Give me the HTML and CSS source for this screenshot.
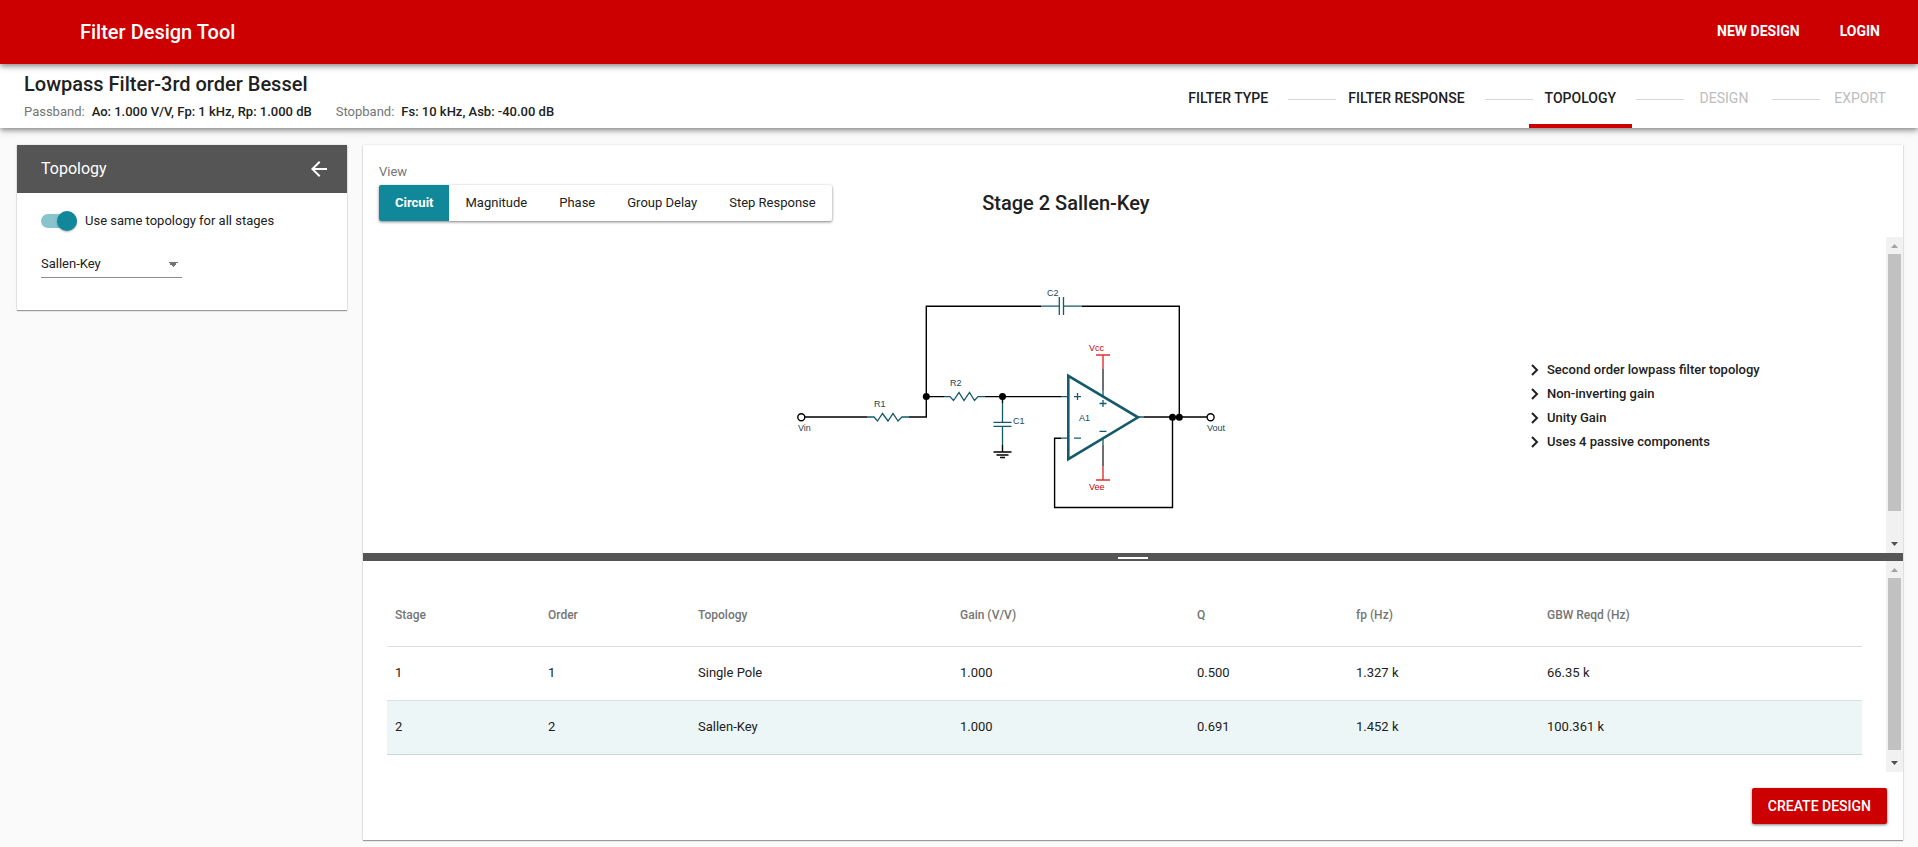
FILE: index.html
```html
<!DOCTYPE html>
<html lang="en">
<head>
<meta charset="utf-8">
<title>Filter Design Tool</title>
<link rel="stylesheet" href="styles.css">
</head>
<body>
<header class="topbar">
  <h1 class="brand">Filter Design Tool</h1>
  <nav class="topnav">
    <a href="#new">NEW DESIGN</a>
    <a href="#login">LOGIN</a>
  </nav>
</header>

<section class="subbar">
  <div class="summary">
    <h2 class="summary-title">Lowpass Filter-3rd order Bessel</h2>
    <p class="summary-specs">
      <span class="spec"><span class="muted">Passband:</span><span class="value">Ao: 1.000 V/V, Fp: 1 kHz, Rp: 1.000 dB</span></span>
      <span class="spec"><span class="muted">Stopband:</span><span class="value">Fs: 10 kHz, Asb: -40.00 dB</span></span>
    </p>
  </div>
  <nav class="steps">
    <a class="step" href="#type">FILTER TYPE</a>
    <span class="step-line"></span>
    <a class="step" href="#response">FILTER RESPONSE</a>
    <span class="step-line"></span>
    <a class="step current" href="#topology" aria-current="step">TOPOLOGY</a>
    <span class="step-line"></span>
    <a class="step disabled" href="#design">DESIGN</a>
    <span class="step-line"></span>
    <a class="step disabled" href="#export">EXPORT</a>
  </nav>
</section>

<main class="workspace">
  <aside class="card side">
    <div class="side-head">
      <h3>Topology</h3>
      <button class="icon-btn" type="button" aria-label="Collapse panel">
        <svg width="24" height="24" viewBox="0 0 24 24"><path fill="#fff" d="M20 11H7.83l5.59-5.59L12 4l-8 8 8 8 1.41-1.41L7.83 13H20v-2z"/></svg>
      </button>
    </div>
    <div class="side-body">
      <label class="toggle"><input type="checkbox" checked><span>Use same topology for all stages</span></label>
      <select class="select" aria-label="Topology">
        <option>Sallen-Key</option>
      </select>
    </div>
  </aside>

  <section class="card content">
    <div class="toolbar">
      <div class="view">
        <span class="view-label" id="view-label">View</span>
        <div class="tabs" role="tablist" aria-labelledby="view-label">
          <button class="tab active" type="button" role="tab" aria-selected="true">Circuit</button>
          <button class="tab" type="button" role="tab">Magnitude</button>
          <button class="tab" type="button" role="tab">Phase</button>
          <button class="tab" type="button" role="tab">Group Delay</button>
          <button class="tab" type="button" role="tab">Step Response</button>
        </div>
      </div>
      <h2 class="stage-title">Stage 2 Sallen-Key</h2>
    </div>

    <div class="pane pane-circuit">
      <div class="circuit">
        <svg class="schematic" viewBox="790 275 440 240" role="img" aria-label="Sallen-Key circuit">
          <g class="wire">
            <path d="M805 417H867M909 417H926.3V306.2H1041M1082 306.2H1179.3V417"/>
            <path d="M926.3 396.6H944M985 396.6H1061M1002.5 396.6V403M1002.5 445V452"/>
            <path d="M1061 438.2H1054.6V507.5H1172.5V417M1144 417H1207"/>
            <path d="M993.5 452H1011.5M996.5 455H1008.5M1000 457.5H1005"/>
            <circle cx="801.3" cy="417.2" r="3.5"/>
            <circle cx="1210.6" cy="417.2" r="3.5"/>
          </g>
          <g class="supply-lead"><path d="M1103 369V390M1103 445V466"/></g>
          <g class="dot">
            <circle cx="926.3" cy="396.6" r="3.5"/>
            <circle cx="1002.5" cy="396.6" r="3.5"/>
            <circle cx="1172.5" cy="417.2" r="3.5"/>
            <circle cx="1179.3" cy="417.2" r="3.5"/>
          </g>
          <g class="part">
            <path d="M867 417H874L877.5 421L882.5 413.5L888 421L893 413.5L898 421L902 417H909"/>
            <path d="M944 396.6H950L953.5 400.5L959 392.5L964 400.5L969.5 392.5L974.5 400.5L978 396.6H985"/>
            <path d="M1002.5 403V422.3M1002.5 426.3V445M993.5 422.3H1011.5M993.5 426.3H1011.5"/>
            <path d="M1041 306.2H1059.3M1063.5 306.2H1082M1059.3 297V315M1063.5 297V315"/>
            <path d="M1061 396.6H1068M1061 438.2H1068M1138 417H1144M1103 390V397M1103 438V445"/>
            <path d="M1074 396.6H1081M1077.5 393V400M1074 438.2H1081M1099.5 403.5H1106.5M1103 400V407M1099.5 431.3H1106.5"/>
          </g>
          <path class="amp" d="M1068.3 375.8V459.2L1138 417.3Z"/>
          <g class="supply"><path d="M1096 355H1110M1103 355V369M1103 466V480M1096 480H1110"/></g>
          <g class="label">
            <text x="798" y="431">Vin</text>
            <text x="874" y="407">R1</text>
            <text x="950" y="386">R2</text>
            <text x="1013" y="424">C1</text>
            <text x="1047" y="296">C2</text>
            <text x="1079" y="421">A1</text>
            <text x="1207" y="431">Vout</text>
            <text class="red" x="1089" y="351">Vcc</text>
            <text class="red" x="1089" y="490">Vee</text>
          </g>
        </svg>
        <ul class="features">
          <li><svg class="chev" viewBox="0 0 8 12"><path d="M1 1L6 6L1 11"/></svg>Second order lowpass filter topology</li>
          <li><svg class="chev" viewBox="0 0 8 12"><path d="M1 1L6 6L1 11"/></svg>Non-inverting gain</li>
          <li><svg class="chev" viewBox="0 0 8 12"><path d="M1 1L6 6L1 11"/></svg>Unity Gain</li>
          <li><svg class="chev" viewBox="0 0 8 12"><path d="M1 1L6 6L1 11"/></svg>Uses 4 passive components</li>
        </ul>
      </div>
      <div class="scrollbar" aria-hidden="true">
        <svg class="sb-arrow off" viewBox="0 0 17 17"><path d="M5 11L8.5 7L12 11Z"/></svg>
        <div class="sb-track"><div class="sb-thumb" style="height:91%"></div></div>
        <svg class="sb-arrow" viewBox="0 0 17 17"><path d="M5 6L8.5 10L12 6Z"/></svg>
      </div>
    </div>

    <div class="splitter" role="separator"><span class="grip"></span></div>

    <div class="pane pane-table">
      <div class="table-wrap">
        <table class="stages">
          <colgroup><col class="c1"><col class="c2"><col class="c3"><col class="c4"><col class="c5"><col class="c6"><col></colgroup>
          <thead>
            <tr><th>Stage</th><th>Order</th><th>Topology</th><th>Gain (V/V)</th><th>Q</th><th>fp (Hz)</th><th>GBW Reqd (Hz)</th></tr>
          </thead>
          <tbody>
            <tr><td>1</td><td>1</td><td>Single Pole</td><td>1.000</td><td>0.500</td><td>1.327 k</td><td>66.35 k</td></tr>
            <tr class="selected"><td>2</td><td>2</td><td>Sallen-Key</td><td>1.000</td><td>0.691</td><td>1.452 k</td><td>100.361 k</td></tr>
          </tbody>
        </table>
      </div>
      <div class="scrollbar" aria-hidden="true">
        <svg class="sb-arrow off" viewBox="0 0 17 17"><path d="M5 11L8.5 7L12 11Z"/></svg>
        <div class="sb-track"><div class="sb-thumb" style="height:97%"></div></div>
        <svg class="sb-arrow" viewBox="0 0 17 17"><path d="M5 6L8.5 10L12 6Z"/></svg>
      </div>
    </div>

    <div class="actions">
      <button class="primary" type="button">CREATE DESIGN</button>
    </div>
  </section>
</main>
</body>
</html>
```

FILE: styles.css
```css
* { box-sizing: border-box; }

body {
  margin: 0;
  min-height: 100vh;
  display: flex;
  flex-direction: column;
  background: #fafafa;
  color: #212121;
  font: 400 13px/20px Roboto, "Liberation Sans", sans-serif;
}

h1, h2, h3, p, ul { margin: 0; padding: 0; font-weight: 400; }
a { color: inherit; text-decoration: none; }
button, select { font: inherit; color: inherit; border: 0; background: none; cursor: pointer; }

/* Top bars */
.topbar {
  position: relative;
  z-index: 2;
  display: flex;
  align-items: center;
  justify-content: space-between;
  height: 64px;
  padding: 0 38px 0 80px;
  background: #c00;
  color: #fff;
  box-shadow: 0 2px 6px rgba(0, 0, 0, .5);
}
.brand { font-size: 20px; line-height: 24px; font-weight: 500; }
.topnav { display: flex; gap: 40px; padding-bottom: 2px; font-size: 14px; font-weight: 700; }

.subbar {
  position: relative;
  z-index: 1;
  display: flex;
  justify-content: space-between;
  height: 64px;
  padding: 0 14px 0 24px;
  background: #fff;
  box-shadow: 0 2px 6px rgba(0, 0, 0, .5);
}
.summary { padding-top: 8px; }
.summary-title { font-size: 20px; line-height: 24px; font-weight: 500; }
.summary-specs { display: flex; gap: 24px; padding-top: 6px; }
.spec { display: flex; gap: 7px; }
.value { font-weight: 500; }
.muted { color: #757575; }

.steps { display: flex; align-items: stretch; font-size: 14px; font-weight: 500; }
.step {
  display: flex;
  justify-content: center;
  min-width: 88px;
  padding: 24px 16px 0;
  border-bottom: 4px solid transparent;
}
.step.current { border-color: #c00; }
.step.disabled { color: #bdbdbd; font-weight: 400; }
.step-line { width: 48px; height: 1px; margin: 35px -4px 0 4px; background: #d6d6d6; }

/* Workspace */
.workspace {
  flex: 1;
  display: flex;
  align-items: flex-start;
  gap: 16px;
  padding: 17px 15px 7px 17px;
}
.card {
  background: #fff;
  box-shadow: 0 1px 1px rgba(0, 0, 0, .35), 0 0 2px rgba(0, 0, 0, .15);
}
.side { width: 330px; flex: none; }
.side-head {
  display: flex;
  align-items: center;
  justify-content: space-between;
  height: 48px;
  padding: 0 16px 0 24px;
  background: #555;
  color: #fff;
}
.side-head h3 { font-size: 16px; }
.icon-btn { display: flex; padding: 0; }
.side-body {
  display: flex;
  flex-direction: column;
  align-items: flex-start;
  gap: 22px;
  padding: 18px 24px 32px;
}
.toggle { display: flex; align-items: center; gap: 8px; }
.toggle input {
  appearance: none;
  display: flex;
  align-items: center;
  justify-content: flex-end;
  width: 36px;
  height: 14px;
  margin: 0;
  border-radius: 7px;
  background: #88c4cd;
}
.toggle input::before {
  content: "";
  flex: none;
  width: 20px;
  height: 20px;
  border-radius: 50%;
  background: #118899;
  box-shadow: 0 1px 2px rgba(0, 0, 0, .3);
}
.select {
  appearance: none;
  width: 141px;
  height: 25px;
  padding: 0 0 2px;
  border-bottom: 1px solid #8c8c8c;
  border-radius: 0;
  background-image: linear-gradient(to bottom left, #757575 50%, transparent 50%),
                    linear-gradient(to bottom right, #757575 50%, transparent 50%);
  background-size: 5px 5px;
  background-position: right 9px top 9px, right 4px top 9px;
  background-repeat: no-repeat;
}

.content {
  flex: 1;
  min-width: 0;
  align-self: stretch;
  display: flex;
  flex-direction: column;
}
.toolbar {
  display: grid;
  grid-template-columns: 40% 60%;
  align-items: end;
  padding: 17px 16px 16px;
}
.view { display: flex; flex-direction: column; align-items: flex-start; gap: 3px; }
.view-label { color: #757575; }
.tabs { display: flex; border-radius: 2px; box-shadow: 0 1px 3px rgba(0, 0, 0, .5); }
.tab { height: 36px; padding: 0 16px; white-space: nowrap; }
.tab.active { background: #118899; color: #fff; font-weight: 700; border-radius: 2px 0 0 2px; }
.stage-title { font-size: 20px; line-height: 36px; font-weight: 500; }

.pane { display: flex; }
.pane-circuit { flex: 3 1 316px; }
.pane-table { flex: 2 1 211px; }

.circuit {
  flex: 1;
  display: grid;
  grid-template-columns: minmax(0, 427fr) 440px minmax(0, 300fr) 356px;
  align-items: center;
}
.schematic { grid-column: 2; width: 440px; height: 240px; }
.wire { fill: none; stroke: #000; stroke-width: 1.4; }
.wire circle { fill: #fff; }
.dot { fill: #000; }
.part { fill: none; stroke: #155a6a; stroke-width: 1.3; }
.supply-lead { stroke: #333; stroke-width: 1.4; }
.supply { fill: none; stroke: #d33; stroke-width: 1.4; }
.amp { fill: none; stroke: #155a6a; stroke-width: 2.6; }
.label { font: 9px "Liberation Sans", Arial, sans-serif; fill: #1c4654; }
.label .red { fill: #c00; }

.features { grid-column: 4; padding-top: 22px; list-style: none; font-weight: 500; }
.features li { display: flex; align-items: center; gap: 8px; line-height: 24px; }
.chev { width: 8px; height: 12px; margin-left: 1px; fill: none; stroke: #212121; stroke-width: 2; }

.scrollbar { width: 17px; flex: none; display: flex; flex-direction: column; background: #f1f1f1; }
.sb-arrow { width: 17px; height: 17px; flex: none; fill: #505050; }
.sb-arrow.off { fill: #a3a3a3; }
.sb-track { flex: 1; padding: 0 2px; }
.sb-thumb { background: #c1c1c1; }

.splitter { display: flex; align-items: center; justify-content: center; height: 8px; background: #555; }
.grip { width: 30px; height: 2px; margin-top: 2px; background: #fff; }

.table-wrap { flex: 1; padding: 24px 24px 0; }
.stages { width: 100%; table-layout: fixed; border-collapse: collapse; }
.stages th, .stages td { padding: 0 8px; text-align: left; border-bottom: 1px solid #dcdfdf; }
.stages th { height: 61px; font-size: 12px; font-weight: 500; color: #757575; }
.stages td { height: 54px; }
.selected { background: #edf6f7; }
.stages .selected td { border-color: #c8d7d9; }
.c1 { width: 153px; }
.c2 { width: 150px; }
.c3 { width: 262px; }
.c4 { width: 237px; }
.c5 { width: 159px; }
.c6 { width: 191px; }

.actions { display: flex; justify-content: flex-end; padding: 16px; }
.primary {
  height: 36px;
  padding: 0 16px;
  border-radius: 2px;
  background: #c00;
  color: #fff;
  font-size: 14px;
  font-weight: 500;
  box-shadow: 0 1px 3px rgba(0, 0, 0, .5);
}
```
